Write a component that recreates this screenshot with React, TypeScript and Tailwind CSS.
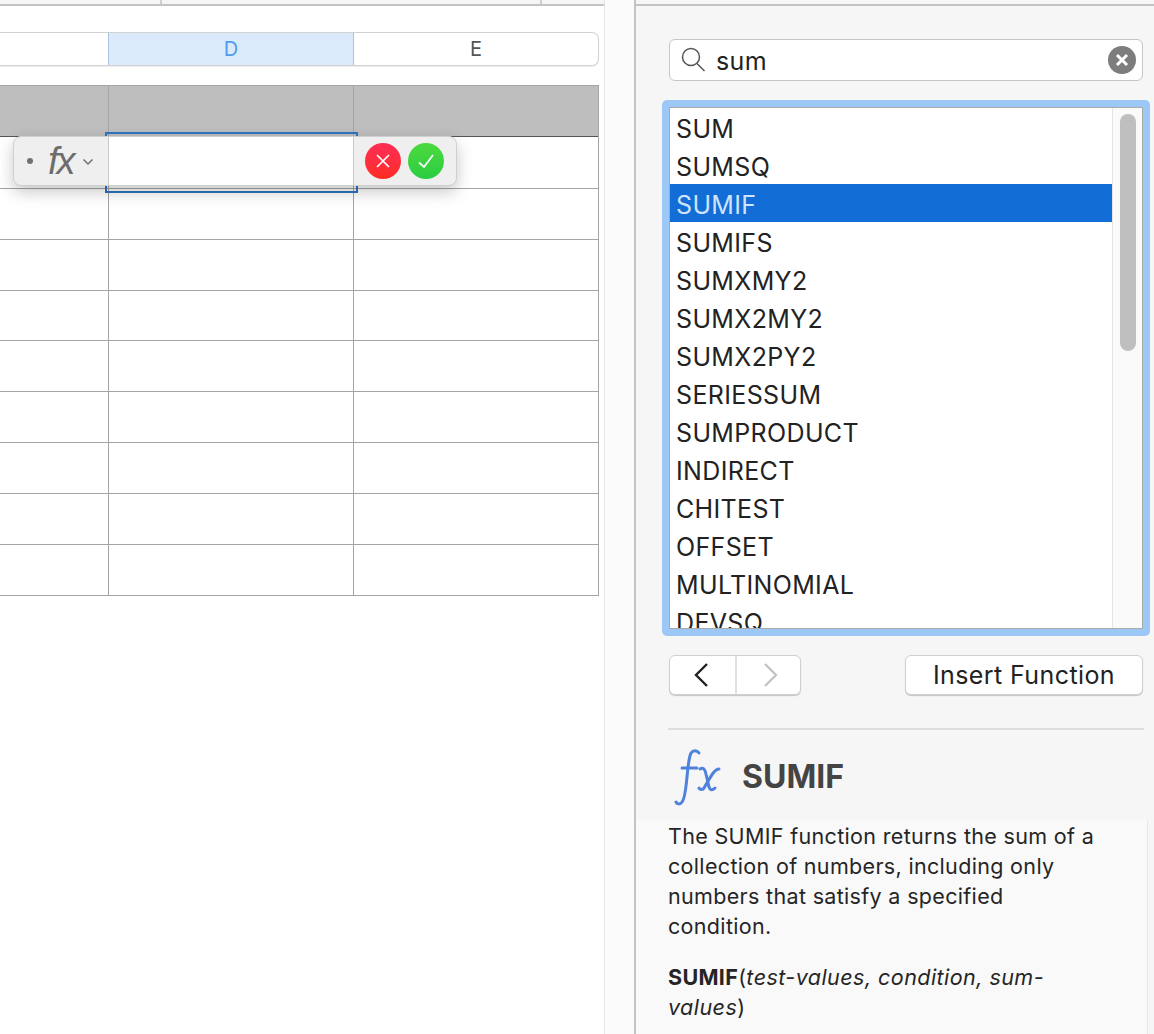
import React from "react";

const functions = ["SUM","SUMSQ","SUMIF","SUMIFS","SUMXMY2","SUMX2MY2","SUMX2PY2","SERIESSUM","SUMPRODUCT","INDIRECT","CHITEST","OFFSET","MULTINOMIAL","DEVSQ"];
const rowHeights = [52, 51, 51, 50, 51, 51, 51, 51, 51];

function Row({ height }: { height: number }) {
  return (
    <div className="flex border-b border-[#a5a5a5]" style={{ height }}>
      <div className="w-[109px] border-r border-[#a5a5a5]" />
      <div className="w-[245px] border-r border-[#a5a5a5]" />
      <div className="flex-1" />
    </div>
  );
}

export default function App() {
  return (
    <div className="flex h-[1034px] w-[1154px] overflow-hidden bg-white text-[#222] font-['Inter','Liberation_Sans',sans-serif]">
      {/* Sheet canvas */}
      <div className="flex w-[604px] shrink-0 flex-col">
        <div className="relative h-[6px] shrink-0 border-b-2 border-[#c4c4c4] bg-[#f6f6f6]">
          <div className="absolute left-[160px] top-0 h-[4px] w-[2px] bg-[#cfcfcf]" />
          <div className="absolute left-[540px] top-0 h-[4px] w-[2px] bg-[#cfcfcf]" />
        </div>
        <div className="relative w-[599px] pt-[26px]">
          <div className="flex h-[34px] rounded-r-[7px] border-y border-r border-[#d2d2d2] text-[20px] leading-[32px] text-[#555] shadow-[0_1px_1px_rgba(0,0,0,0.08)]">
            <div className="w-[108px]" />
            <div className="w-[246px] border-x border-[#a9c3de] bg-[#dbeafb] text-center text-[#4f9bf1]">D</div>
            <div className="flex-1 text-center">E</div>
          </div>
          <div className="mt-[19px] border-t border-r border-[#a5a5a5]">
            <div className="flex h-[51px] border-b border-[#555] bg-[#bdbebd]">
              <div className="w-[109px] border-r border-[#a5a5a5]" />
              <div className="w-[245px] border-r border-[#a5a5a5]" />
            </div>
            {rowHeights.map((h, i) => <Row key={i} height={h} />)}
          </div>

          {/* Selection brackets */}
          <div className="absolute left-[105px] top-[126px] h-[61px] w-[253px] border-2 border-[#2f75c0]" />

          {/* Formula editor */}
          <div className="absolute left-[13px] top-[130px] flex h-[50px] w-[444px] overflow-hidden rounded-[8px] border border-[#cfcfcf] bg-[#efefef] shadow-[0_6px_16px_rgba(0,0,0,0.22)]">
            <div className="flex w-[94px] shrink-0 items-center">
              <span className="ml-[13px] h-[6px] w-[6px] rounded-full bg-[#707070]" />
              <span className="ml-[15px] text-[38px] leading-none italic font-['Liberation_Sans',sans-serif] text-[#6d6d6d] tracking-[-2px]">fx</span>
              <svg className="ml-[8px] mt-[1px]" width="12" height="8" viewBox="0 0 12 8" fill="none" stroke="#707070" strokeWidth="1.5"><path d="M1.5 1.5 6 6l4.5-4.5" /></svg>
            </div>
            <div className="h-full w-[246px] shrink-0 border-x border-[#c8c8c8] bg-white" />
            <div className="flex items-center gap-[7px] pl-[11px]">
              <span className="flex h-[36px] w-[36px] items-center justify-center rounded-full bg-gradient-to-b from-[#ff2d55] to-[#ff2d20]">
                <svg width="16" height="16" viewBox="0 0 16 16" fill="none" stroke="white" strokeWidth="1.7"><path d="M2 2l12 12M14 2 2 14" /></svg>
              </span>
              <span className="flex h-[36px] w-[36px] items-center justify-center rounded-full bg-gradient-to-b from-[#4cd93f] to-[#28cd41]">
                <svg width="18" height="16" viewBox="0 0 18 16" fill="none" stroke="white" strokeWidth="1.7"><path d="M2 9.5 7 14 16 2" /></svg>
              </span>
            </div>
          </div>
        </div>
      </div>

      {/* Gutter */}
      <div className="w-[30px] shrink-0 border-l border-[#e6e6e6] bg-[#fbfbfb]" />

      {/* Side panel */}
      <div className="relative flex w-[520px] shrink-0 flex-col border-l-2 border-[#c4c4c4] bg-[#f6f6f6]">
        <div className="h-[6px] shrink-0 border-b-2 border-[#c4c4c4]" />
        <div className="ml-[33px] mt-[33px] flex h-[42px] w-[474px] shrink-0 items-center rounded-[6px] border border-[#c6c6c6] bg-white">
          <svg className="ml-[11px]" width="25" height="26" viewBox="0 0 25 26" fill="none" stroke="#555" strokeWidth="1.5"><circle cx="10" cy="10" r="8.5" /><path d="m16 16.5 7.5 7.5" /></svg>
          <span className="ml-[10px] mt-[2px] text-[25px] leading-none tracking-[0.4px] text-[#222]">sum</span>
          <span className="ml-auto mr-[6px] flex h-[28px] w-[28px] items-center justify-center rounded-full bg-[#7d7d7d]">
            <svg width="14" height="14" viewBox="0 0 14 14" fill="none" stroke="white" strokeWidth="3"><path d="m2 2 10 10M12 2 2 12" /></svg>
          </span>
        </div>

        <div className="ml-[26px] mt-[19px] h-[536px] w-[488px] shrink-0 rounded-[5px] bg-[#9cc8f8] p-[7px]">
          <div className="flex h-[522px] overflow-hidden border border-[#a9a9a9] bg-white">
            <div className="h-full flex-1 overflow-hidden">
              {functions.map((f) => (
                <div key={f} className={`h-[38px] pl-[6px] text-[25px] leading-[42px] tracking-[0.35px] whitespace-nowrap ${f === "SUMIF" ? "bg-[#126dd6] text-[#cfe3fb]" : "text-[#222]"}`}>{f}</div>
              ))}
            </div>
            <div className="w-[30px] shrink-0 border-l border-[#e4e4e4] bg-[#fafafa] pl-[7px] pt-[6px]">
              <div className="h-[237px] w-[16px] rounded-full bg-[#bfbfbf]" />
            </div>
          </div>
        </div>

        <div className="ml-[33px] mt-[19px] flex w-[474px] shrink-0 justify-between">
          <div className="flex h-[40px] w-[132px] rounded-[6px] border border-[#d0d0d0] bg-white shadow-[0_1px_1px_rgba(0,0,0,0.2)]">
            <div className="flex w-[67px] items-center justify-center border-r-2 border-[#e0e0e0]">
              <svg className="mr-[4px]" width="16" height="26" viewBox="0 0 16 26" fill="none" stroke="#222" strokeWidth="2.4"><path d="M14 2 3 13l11 11" /></svg>
            </div>
            <div className="flex flex-1 items-center justify-center">
              <svg className="ml-[4px]" width="16" height="26" viewBox="0 0 16 26" fill="none" stroke="#c4c4c4" strokeWidth="2.4"><path d="m2 2 11 11L2 24" /></svg>
            </div>
          </div>
          <div className="flex h-[40px] w-[238px] items-center justify-center rounded-[6px] border border-[#d0d0d0] bg-white pt-[2px] text-[25px] tracking-[0.4px] text-[#222] shadow-[0_1px_1px_rgba(0,0,0,0.2)]">Insert Function</div>
        </div>

        <div className="ml-[32px] mt-[33px] h-[2px] w-[476px] shrink-0 bg-[#dedede]" />

        <div className="ml-[33px] mt-[14px] flex h-[76px] shrink-0 items-start">
          <svg className="ml-[1px] mt-[4px]" width="52" height="60" viewBox="0 0 52 60" fill="none" stroke="#4f82dc" strokeWidth="3" strokeLinecap="round">
            <path d="M29 5c-2-3-6-3-8 0-2 4-3 13-4 24-1 10-2 22-5 25-2 3-5 2-6 0" />
            <path d="M12 20h15" />
            <path d="M30 21c3-2 5 0 6 5l3 13c1 3 3 4 6 1" />
            <path d="M49 21c-4 0-7 5-15 19-1 2-4 2-5 0" />
          </svg>
          <span className="ml-[20px] mt-[14px] text-[32px] leading-[38px] font-bold text-[#444]">SUMIF</span>
        </div>

        <div className="w-[512px] flex-1 border-r border-[#e8e8e8] bg-[#f9f9f9] pl-[32px] pr-[40px] pt-[1px] text-[21.5px] leading-[30px] tracking-[0.33px] text-[#252525]">
          <p>The SUMIF function returns the sum of a collection of numbers, including only numbers that satisfy a specified condition.</p>
          <p className="mt-[21px]"><b className="font-bold">SUMIF</b>(<i className="tracking-[0.45px]">test-values, condition, sum-values</i>)</p>
        </div>
      </div>
    </div>
  );
}
